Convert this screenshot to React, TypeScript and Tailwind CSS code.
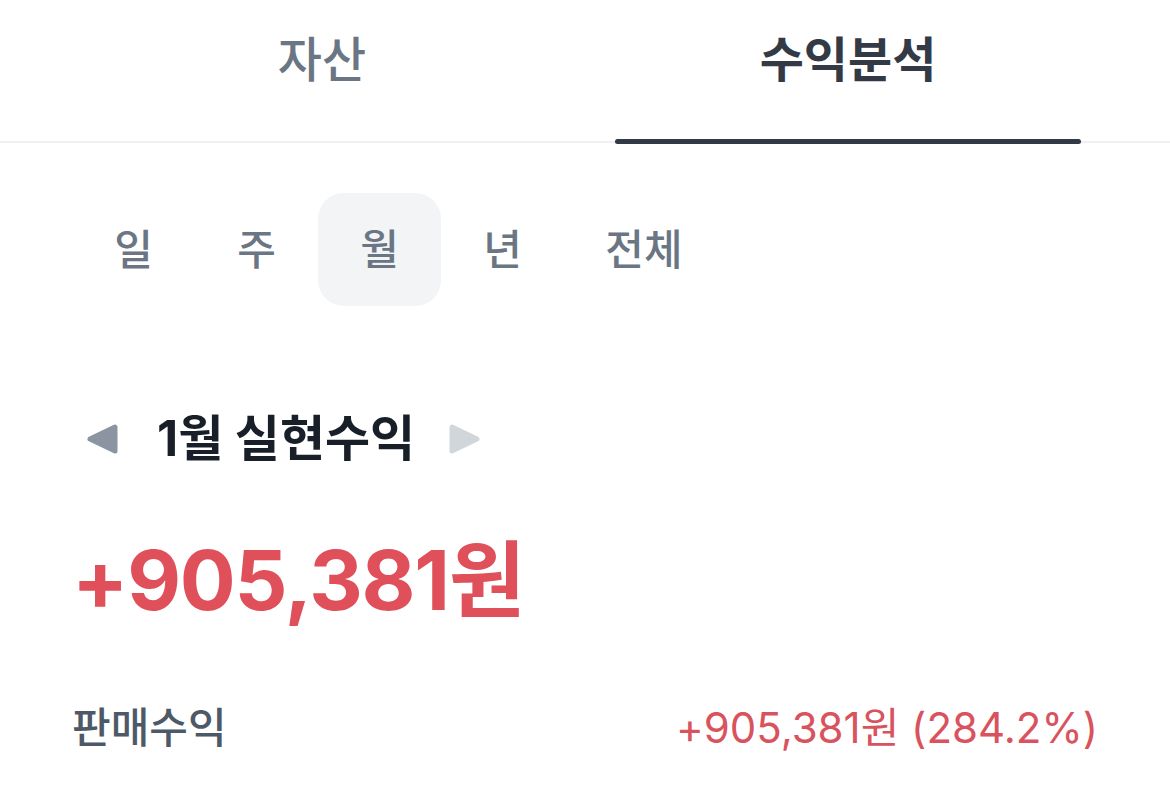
import { useState } from 'react';

const font = { fontFamily: 'Inter, "Noto Sans CJK KR", sans-serif' };

function Triangle({ dir, color }: { dir: 'left' | 'right'; color: string }) {
  const points = dir === 'left' ? '29,4 29,28 4,16' : '3,4 3,28 28,16';
  return (
    <svg width="32" height="32" viewBox="0 0 32 32">
      <polygon points={points} fill={color} stroke={color} strokeWidth="5" strokeLinejoin="round" />
    </svg>
  );
}

export default function App() {
  const [tab, setTab] = useState('수익분석');
  const [period, setPeriod] = useState('월');
  const tabs = ['자산', '수익분석'];
  const periods = ['일', '주', '월', '년', '전체'];

  return (
    <div className="min-h-screen w-[1170px] bg-white" style={font}>
      {/* Tabs */}
      <div className="flex border-b-2 border-[#eef0f2] px-[59px]">
        {tabs.map((t) => (
          <button key={t} onClick={() => setTab(t)} className="flex flex-1 flex-col items-center">
            <span
              className={`pt-[28px] text-[48px] leading-[64px] ${
                tab === t ? 'font-bold text-[#333a46]' : 'font-medium text-[#6b7684]'
              }`}
            >
              {t}
            </span>
            <span
              className={`mt-[47px] -mb-[3px] h-[5px] w-[calc(100%-60px)] rounded-full ${
                tab === t ? 'bg-[#333a46]' : 'bg-transparent'
              }`}
            />
          </button>
        ))}
      </div>

      {/* Period */}
      <div className="mt-[50px] flex px-[72px]">
        {periods.map((p) => (
          <button
            key={p}
            onClick={() => setPeriod(p)}
            className={`h-[113px] rounded-[26px] text-center text-[42px] font-medium text-[#6b7684] ${
              p === '전체' ? 'w-[160px]' : 'w-[123px]'
            } ${period === p ? 'bg-[#f2f4f6]' : ''}`}
          >
            {p}
          </button>
        ))}
      </div>

      {/* Title */}
      <div className="mt-[108px] flex items-center pl-[86px]">
        <Triangle dir="left" color="#8b95a1" />
        <span className="ml-[39px] mr-[34px] text-[49px] font-bold leading-[50px] text-[#191f28]">
          1월 실현수익
        </span>
        <Triangle dir="right" color="#d1d6db" />
      </div>

      {/* Amount */}
      <div className="mt-[68px] px-[72px] text-[83px] font-bold leading-[96px] tracking-[-1.2px] text-[#e0505a]">
        +905,381원
      </div>

      {/* Row */}
      <div className="mt-[76px] flex items-center justify-between px-[72px] text-[42px] leading-[48px]">
        <span className="font-medium text-[#4e5968]">판매수익</span>
        <span className="text-[#d9535e]">+905,381원 (284.2%)</span>
      </div>
    </div>
  );
}
